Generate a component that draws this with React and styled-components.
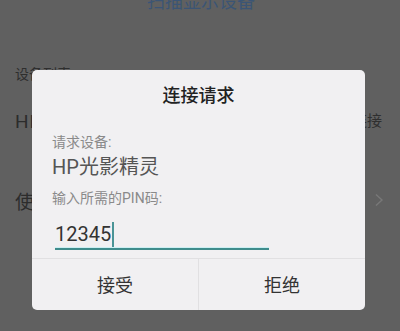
import React from "react";
import styled, { createGlobalStyle } from "styled-components";

const GlobalStyle = createGlobalStyle`
  html, body {
    margin: 0;
    padding: 0;
    background: #606060;
  }
  body {
    font-family: Roboto, "Noto Sans CJK SC", sans-serif;
  }
`;

const Screen = styled.div`
  position: relative;
  width: 400px;
  height: 331px;
  overflow: hidden;
  background: #606060;
`;

const Page = styled.div`
  display: flex;
  flex-direction: column;
`;

const ScanTitle = styled.div`
  margin-top: -7px;
  text-align: center;
  font-size: 18px;
  line-height: 18px;
  color: #3b5575;
  padding-left: 2px;
`;

const SectionLabel = styled.div`
  margin-top: 55px;
  padding-left: 15px;
  font-size: 14px;
  line-height: 16px;
  color: #2e2e2e;
`;

const ListRow = styled.div`
  display: flex;
  align-items: center;
  justify-content: space-between;
  height: ${(p) => p.$h}px;
  padding: 0 18px 0 15px;
  margin-top: ${(p) => p.$top || 0}px;
  color: #2c2c2c;
  font-size: 19px;
  letter-spacing: 1px;
`;

const RowAction = styled.span`
  font-size: 15px;
  letter-spacing: 0;
  color: #2f2f2f;
`;

const Chevron = styled.svg`
  width: 10px;
  height: 14px;
  margin-right: -2px;
`;

const Dialog = styled.div`
  position: absolute;
  left: 32px;
  top: 70px;
  width: 333px;
  height: 240px;
  background: #f1f0f2;
  border-radius: 5px;
  display: flex;
  flex-direction: column;
`;

const DialogTitle = styled.div`
  padding-top: 17px;
  text-align: center;
  font-size: 18px;
  line-height: 18px;
  font-weight: 500;
  color: #222;
`;

const Body = styled.div`
  display: flex;
  flex-direction: column;
  padding-left: 20px;
`;

const FieldLabel = styled.div`
  margin-top: ${(p) => p.$top}px;
  font-size: 14px;
  line-height: 16px;
  color: #8a8a8a;
`;

const DeviceName = styled.div`
  margin-top: 6px;
  font-size: 20px;
  line-height: 22px;
  color: #555;
`;

const PinInput = styled.div`
  margin: 16px 0 0 3px;
  width: 214px;
  height: 24px;
  padding-bottom: 2px;
  display: flex;
  align-items: center;
  font-size: 20px;
  line-height: 24px;
  color: #333;
  border-bottom: 2px solid #3f8c8c;
  box-shadow: inset 0 -1px 0 #cdeff3;
`;

const Caret = styled.span`
  display: inline-block;
  width: 2px;
  height: 25px;
  margin-left: 1px;
  background: #4a9496;
`;

const Footer = styled.div`
  margin-top: 8px;
  flex: 1;
  display: grid;
  grid-template-columns: 166px 1fr;
  border-top: 1px solid #e1e0e2;
`;

const ActionButton = styled.button`
  border: none;
  background: transparent;
  font-family: "Noto Sans CJK SC", sans-serif;
  font-size: 18px;
  color: #333;
  padding: 0 0 2px;
  border-left: ${(p) => (p.$divider ? "1px solid #e1e0e2" : "none")};
`;

export default function App() {
  return (
    <Screen>
      <GlobalStyle />
      <Page>
        <ScanTitle>扫描显示设备</ScanTitle>
        <SectionLabel>设备列表</SectionLabel>
        <ListRow $h={34} $top={20}>
          <span>HP光影精灵</span>
          <RowAction>连接</RowAction>
        </ListRow>
        <ListRow $h={40} $top={44}>
          <span>使用帮助</span>
          <Chevron viewBox="0 0 10 14">
            <path d="M2 1.5 L8 7 L2 12.5" fill="none" stroke="#787878" strokeWidth="1.4" />
          </Chevron>
        </ListRow>
      </Page>
      <Dialog>
        <DialogTitle>连接请求</DialogTitle>
        <Body>
          <FieldLabel $top={29}>请求设备:</FieldLabel>
          <DeviceName>HP光影精灵</DeviceName>
          <FieldLabel $top={12}>输入所需的PIN码:</FieldLabel>
          <PinInput>
            12345
            <Caret />
          </PinInput>
        </Body>
        <Footer>
          <ActionButton>接受</ActionButton>
          <ActionButton $divider>拒绝</ActionButton>
        </Footer>
      </Dialog>
    </Screen>
  );
}
